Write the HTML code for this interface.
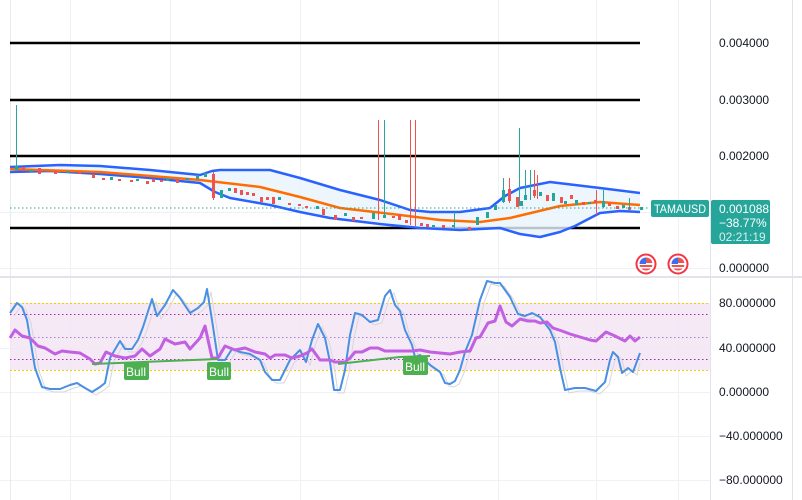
<!DOCTYPE html>
<html><head><meta charset="utf-8"><style>
body{margin:0;background:#fff;width:802px;height:500px;overflow:hidden;font-family:"Liberation Sans",sans-serif}
svg{display:block}
text{font-family:"Liberation Sans",sans-serif}
</style></head><body>
<svg width="802" height="500" xmlns="http://www.w3.org/2000/svg">
<defs><clipPath id="c1"><circle cx="646" cy="264" r="7"/></clipPath><clipPath id="c2"><circle cx="678" cy="264" r="7"/></clipPath></defs>
<rect width="802" height="500" fill="#fff"/>
<g stroke="#f0f1f4" stroke-width="1">
<line x1="70.5" y1="0" x2="70.5" y2="500"/><line x1="170.5" y1="0" x2="170.5" y2="500"/>
<line x1="300.5" y1="0" x2="300.5" y2="500"/><line x1="498.5" y1="0" x2="498.5" y2="500"/>
<line x1="596.5" y1="0" x2="596.5" y2="500"/><line x1="678.5" y1="0" x2="678.5" y2="500"/>
<line x1="0" y1="212.5" x2="710" y2="212.5"/>
<line x1="0" y1="268.5" x2="710" y2="268.5"/>
<line x1="0" y1="348.5" x2="710" y2="348.5"/><line x1="0" y1="392.5" x2="710" y2="392.5"/>
<line x1="0" y1="436.5" x2="710" y2="436.5"/><line x1="0" y1="480.5" x2="710" y2="480.5"/>
</g>
<line x1="10.5" y1="0" x2="10.5" y2="500" stroke="#e8e9ee"/>
<line x1="0" y1="277" x2="802" y2="277" stroke="#e0e3eb" stroke-width="2"/>
<line x1="710.5" y1="0" x2="710.5" y2="500" stroke="#e0e3eb"/>
<line x1="792.5" y1="0" x2="792.5" y2="500" stroke="#e0e3eb"/>
<g stroke="#000" stroke-width="2.5">
<line x1="10" y1="43" x2="640" y2="43"/><line x1="10" y1="100" x2="640" y2="100"/>
<line x1="10" y1="156" x2="640" y2="156"/><line x1="10" y1="228" x2="640" y2="228"/>
</g>
<path d="M10,167 L60,165 L100,166 L150,170 L200,175 L212,171 L220,170 L270,170 L300,178 L340,190 L380,200 L410,210 L430,212 L460,212 L490,208 L505,196 L520,188 L550,182 L600,188 L640,193 L640,212 L620,211 L600,213 L575,226 L560,232 L540,237 L520,234 L500,228 L460,230 L420,228 L380,224 L330,218 L300,212 L270,205 L230,198 L215,192 L200,183 L150,178 L100,174 L50,171 L10,172 Z" fill="#eaf4fd" opacity="0.8"/>
<polyline fill="none" stroke="#2962ff" stroke-width="2.5" stroke-linejoin="round" points="10,167 60,165 100,166 150,170 200,175 212,171 220,170 270,170 300,178 340,190 380,200 410,210 430,212 460,212 490,208 505,196 520,188 550,182 600,188 640,193"/>
<polyline fill="none" stroke="#2962ff" stroke-width="2.5" stroke-linejoin="round" points="10,172 50,171 100,174 150,178 200,183 215,192 230,198 270,205 300,212 330,218 380,224 420,228 460,230 500,228 520,234 540,237 560,232 575,226 600,213 620,211 640,212"/>
<polyline fill="none" stroke="#ff6d00" stroke-width="2.5" stroke-linejoin="round" points="10,169 100,172 200,180 260,187 300,197 340,208 400,215 440,220 480,222 510,218 560,206 600,202 640,205"/>
<line x1="10" y1="208" x2="650" y2="208" stroke="#26a69a" stroke-dasharray="1.5,2.5"/>
<g stroke-width="1">
<line x1="16.5" y1="105" x2="16.5" y2="170" stroke="#26a69a"/><rect x="15" y="166" width="3" height="4" fill="#26a69a"/>
<g fill="#ef5350">
<rect x="22" y="167" width="3" height="3"/><rect x="38" y="168" width="3" height="6"/><rect x="54" y="171" width="3" height="3"/><rect x="78" y="172" width="3" height="2"/><rect x="92" y="174" width="3" height="4"/><rect x="102" y="178" width="3" height="2"/><rect x="118" y="179" width="3" height="2"/><rect x="130" y="180" width="3" height="2"/><rect x="146" y="181" width="3" height="3"/><rect x="152" y="179" width="3" height="3"/><rect x="160" y="180" width="3" height="2"/><rect x="176" y="180" width="3" height="3"/>
<rect x="212" y="174" width="3" height="24"/><rect x="234" y="188" width="3" height="5"/><rect x="240" y="190" width="3" height="5"/><rect x="246" y="192" width="3" height="3"/><rect x="252" y="193" width="3" height="3"/><rect x="260" y="197" width="3" height="5"/><rect x="266" y="197" width="3" height="3"/><rect x="272" y="197" width="3" height="7"/><rect x="288" y="203" width="3" height="2"/><rect x="298" y="204" width="3" height="2"/><rect x="305" y="206" width="3" height="2"/><rect x="322" y="209" width="3" height="6"/><rect x="334" y="215" width="3" height="5"/><rect x="352" y="217" width="3" height="4"/><rect x="360" y="217" width="3" height="2"/><rect x="392" y="216" width="3" height="2"/><rect x="398" y="214" width="3" height="6"/><rect x="405" y="220" width="3" height="3"/><rect x="420" y="223" width="3" height="3"/><rect x="426" y="224" width="3" height="3"/><rect x="442" y="225" width="3" height="3"/><rect x="468" y="227" width="3" height="3"/>
<rect x="508" y="189" width="3" height="12"/><rect x="516" y="197" width="3" height="10"/><rect x="533" y="190" width="3" height="6"/><rect x="546" y="195" width="3" height="6"/><rect x="560" y="197" width="3" height="6"/><rect x="570" y="195" width="3" height="4"/><rect x="582" y="202" width="3" height="3"/><rect x="594" y="200" width="3" height="3"/><rect x="608" y="203" width="3" height="3"/><rect x="616" y="206" width="3" height="3"/><rect x="628" y="207" width="3" height="3"/>
</g>
<g stroke="#ef5350"><line x1="213.5" y1="172" x2="213.5" y2="200"/><line x1="378.5" y1="120" x2="378.5" y2="220"/><line x1="410.5" y1="120" x2="410.5" y2="225"/><line x1="415.5" y1="120" x2="415.5" y2="226"/><line x1="509.5" y1="178" x2="509.5" y2="203"/><line x1="534.5" y1="170" x2="534.5" y2="198"/><line x1="537.5" y1="175" x2="537.5" y2="199"/><line x1="596.5" y1="190" x2="596.5" y2="215"/></g>
<g fill="#26a69a">
<rect x="30" y="170" width="3" height="2"/><rect x="66" y="171" width="3" height="2"/><rect x="110" y="177" width="3" height="3"/><rect x="136" y="179" width="3" height="2"/><rect x="166" y="178" width="3" height="3"/><rect x="186" y="178" width="3" height="2"/><rect x="196" y="175" width="3" height="4"/><rect x="204" y="173" width="3" height="4"/><rect x="220" y="190" width="3" height="8"/><rect x="228" y="188" width="3" height="3"/><rect x="278" y="197" width="3" height="3"/><rect x="316" y="206" width="3" height="3"/><rect x="344" y="213" width="3" height="3"/><rect x="372" y="213" width="3" height="6"/><rect x="383" y="215" width="3" height="3"/><rect x="432" y="225" width="3" height="2"/><rect x="452" y="225" width="3" height="2"/><rect x="476" y="217" width="3" height="8"/><rect x="486" y="212" width="3" height="6"/><rect x="494" y="205" width="3" height="5"/><rect x="502" y="190" width="3" height="12"/><rect x="520" y="201" width="3" height="5"/><rect x="524" y="195" width="3" height="5"/><rect x="539" y="192" width="3" height="4"/><rect x="552" y="193" width="3" height="8"/><rect x="564" y="201" width="3" height="3"/><rect x="575" y="200" width="3" height="5"/><rect x="588" y="202" width="3" height="2"/><rect x="602" y="201" width="3" height="6"/><rect x="622" y="205" width="3" height="3"/><rect x="640" y="207" width="3" height="3"/></g>
<g stroke="#26a69a"><line x1="384.5" y1="120" x2="384.5" y2="218"/><line x1="454.5" y1="212" x2="454.5" y2="228"/><line x1="503.5" y1="178" x2="503.5" y2="203"/><line x1="519.5" y1="128" x2="519.5" y2="206"/><line x1="525.5" y1="170" x2="525.5" y2="200"/><line x1="530.5" y1="170" x2="530.5" y2="200"/><line x1="603.5" y1="190" x2="603.5" y2="208"/><line x1="629.5" y1="198" x2="629.5" y2="210"/></g>
</g>
<rect x="10" y="303" width="700" height="67" fill="#f3e5f5" opacity="0.85"/>
<g stroke-width="1">
<line x1="10" y1="303.5" x2="710" y2="303.5" stroke="#f2d000" stroke-dasharray="2,2"/>
<line x1="10" y1="370.5" x2="710" y2="370.5" stroke="#f2d000" stroke-dasharray="2,2"/>
<line x1="10" y1="314.5" x2="710" y2="314.5" stroke="#9c27b0" stroke-dasharray="1.5,2.5"/>
<line x1="10" y1="337.5" x2="710" y2="337.5" stroke="#7e57c2" stroke-dasharray="1.5,2.5" opacity="0.7"/>
<line x1="10" y1="359.5" x2="710" y2="359.5" stroke="#9c27b0" stroke-dasharray="1.5,2.5"/>
</g>
<polyline fill="none" stroke="#d6d6dc" stroke-width="1" transform="translate(4,3)" points="10,313 17,303 22,307 27,320 35,368 42,387 50,389 60,389 70,385 77,383 85,388 92,392 100,387 105,383 110,358 120,341 125,349 132,349 138,340 143,327 152,299 157,316 165,305 173,290 180,298 190,313 198,308 204,302 207,289 212,320 218,360 225,360 232,349 240,352 250,354 260,360 265,372 272,380 280,380 290,360 300,350 306,362 312,340 318,324 325,338 330,362 334,390 340,390 345,370 350,335 355,313 362,315 370,322 378,320 385,296 390,290 395,305 400,311 405,330 412,345 415,357 420,355 430,365 440,372 445,383 450,384 455,381 460,370 465,352 472,335 480,300 487,281 495,283 500,283 510,297 518,314 525,316 532,313 540,317 550,330 555,342 560,368 565,390 575,388 585,388 596,391 605,382 610,360 613,352 618,357 622,373 628,368 633,372 636,360"/>
<polyline fill="none" stroke="#4a90e2" stroke-width="2" stroke-linejoin="round" points="10,313 17,303 22,307 27,320 35,368 42,387 50,389 60,389 70,385 77,383 85,388 92,392 100,387 105,383 110,358 120,341 125,349 132,349 138,340 143,327 152,299 157,316 165,305 173,290 180,298 190,313 198,308 204,302 207,289 212,320 218,360 225,360 232,349 240,352 250,354 260,360 265,372 272,380 280,380 290,360 300,350 306,362 312,340 318,324 325,338 330,362 334,390 340,390 345,370 350,335 355,313 362,315 370,322 378,320 385,296 390,290 395,305 400,311 405,330 412,345 415,357 420,355 430,365 440,372 445,383 450,384 455,381 460,370 465,352 472,335 480,300 487,281 495,283 500,283 510,297 518,314 525,316 532,313 540,317 550,330 555,342 560,368 565,390 575,388 585,388 596,391 605,382 610,360 613,352 618,357 622,373 628,368 633,372 640,353"/>
<polyline fill="none" stroke="#c160e0" stroke-width="3" stroke-linejoin="round" points="10,338 15,330 22,336 30,338 38,346 45,348 55,354 62,351 70,352 80,353 90,359 95,364 100,363 106,352 115,356 125,358 135,356 142,349 150,356 160,349 165,339 175,344 185,342 190,349 200,338 205,326 212,358 218,358 225,346 235,350 245,348 255,352 265,354 270,358 275,355 285,355 292,358 300,356 307,353 312,349 320,360 330,360 335,362 345,362 350,358 355,352 362,352 370,348 378,348 385,351 400,351 412,351 420,350 430,352 450,354 460,352 470,351 476,338 480,337 488,323 495,321 500,306 506,322 512,326 520,319 528,321 535,321 540,323 547,322 553,328 562,331 570,334 580,337 590,340 596,341 606,332 615,336 625,341 630,336 635,341 640,337"/>
<g stroke="#4caf50" stroke-width="2"><line x1="92" y1="364" x2="218" y2="359"/><line x1="338" y1="364" x2="400" y2="357"/><line x1="400" y1="357" x2="430" y2="356"/></g>
<g fill="#4caf50"><rect x="124" y="362" width="25" height="18" rx="2"/><rect x="207" y="362" width="24" height="18" rx="2"/><rect x="403" y="357" width="25" height="18" rx="2"/></g>
<g fill="#fff" font-size="12"><text x="126" y="376">Bull</text><text x="209" y="376">Bull</text><text x="405" y="371">Bull</text></g>
<g>
<circle cx="646" cy="264" r="9.5" fill="#fff" stroke="#f23645" stroke-width="2"/>
<g clip-path="url(#c1)"><rect x="638" y="256" width="16" height="16" fill="#ef5350"/><rect x="638" y="263" width="16" height="2" fill="#fff"/><rect x="638" y="267" width="16" height="1.5" fill="#fff"/><rect x="638" y="256" width="8" height="8" fill="#3a6ff0"/></g>
<circle cx="678" cy="264" r="9.5" fill="#fff" stroke="#f23645" stroke-width="2"/>
<g clip-path="url(#c2)"><rect x="670" y="256" width="16" height="16" fill="#ef5350"/><rect x="670" y="263" width="16" height="2" fill="#fff"/><rect x="670" y="267" width="16" height="1.5" fill="#fff"/><rect x="670" y="256" width="8" height="8" fill="#3a6ff0"/></g>
<circle cx="646" cy="264" r="7" fill="none" stroke="#fff" stroke-width="1"/><circle cx="678" cy="264" r="7" fill="none" stroke="#fff" stroke-width="1"/>
</g>
<g font-size="12" fill="#131722">
<text x="719" y="47">0.004000</text><text x="719" y="104">0.003000</text><text x="719" y="160">0.002000</text><text x="719" y="272">0.000000</text>
<text x="719" y="307">80.000000</text><text x="719" y="352">40.000000</text><text x="719" y="396">0.000000</text><text x="719" y="440">−40.000000</text><text x="719" y="484">−80.000000</text>
</g>
<rect x="651" y="200" width="58" height="17" rx="2" fill="#26a69a"/>
<text x="654" y="213" font-size="11.5" fill="#fff" textLength="52" lengthAdjust="spacingAndGlyphs">TAMAUSD</text>
<rect x="711" y="200" width="59" height="44" rx="2" fill="#26a69a"/>
<g font-size="12" fill="#fff"><text x="719" y="213">0.001088</text><text x="719" y="227">−38.77%</text><text x="719" y="241" fill="#d7f0ec">02:21:19</text></g>
</svg>
</body></html>
